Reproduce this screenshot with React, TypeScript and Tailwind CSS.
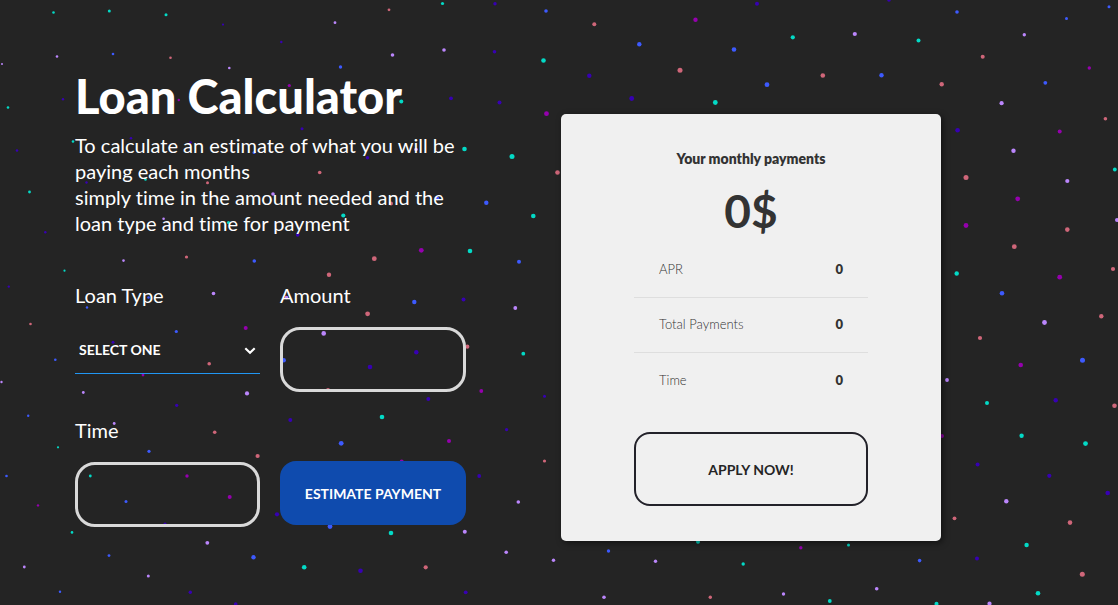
import { useState, type FormEvent } from "react";

type Dot = [x: number, y: number, r: number];

const CONFETTI: { color: string; dots: Dot[] }[] = [
  {
    color: "#03dac6",
    dots: [
      [53.5, 12.5, 1.3], [109.3, 11, 1.5], [166, 14.7, 1.5], [8, 107.5, 1.3], [73, 141.5, 1.3], [29.5, 192, 1.4],
      [64.5, 270.7, 1.1], [228.5, 222.5, 1.6], [145.5, 179.5, 1.3], [442.5, 3.5, 1.6], [543.5, 60.5, 2.3],
      [401.3, 101.5, 2], [464.5, 149, 2.3], [512, 156.5, 2.5], [533.3, 216, 2.3], [343.3, 215.5, 2.1], [470, 251, 2.3],
      [792.8, 37.3, 2.1], [715.3, 102.5, 2.4], [918.5, 40.5, 2], [1114.8, 169.5, 1.9], [956.7, 273.5, 2.2],
      [58, 447.3, 1.1], [90.3, 476, 1.4], [72, 532.4, 1.3], [523.3, 353.7, 1.9], [382, 417, 2.3], [391, 533, 2.3],
      [304.2, 567.3, 2.3], [698, 541.7, 2], [743.2, 564, 1.7], [829.8, 601, 1.9], [987, 403, 2], [1021.6, 435.7, 2.2],
      [1085.5, 443.6, 2.4], [1026.6, 545, 2.2], [848.5, 545, 1.5], [1038, 593.3, 2.3], [936.5, 603.7, 2],
    ],
  },
  {
    color: "#3700b3",
    dots: [
      [223, 24.6, 1.1], [63, 99.3, 1.2], [17, 150.5, 1.3], [131, 138.3, 1.3], [86.5, 182.5, 1.2], [45.3, 232.3, 1.2],
      [8.8, 286.6, 1.2], [190.5, 142.5, 1.3], [495, 3.8, 1.7], [281.3, 42, 1.2], [494.5, 51.7, 1.8], [451, 98.3, 1.9],
      [499.5, 102.5, 2], [302, 128.7, 1.5], [367.5, 157.7, 1.7], [297.7, 234.8, 1.9], [463.5, 299.5, 2],
      [757, 3.7, 2], [589.3, 75.8, 2.2], [631.7, 98.5, 2.4], [889, 0, 1.8], [957.6, 130.3, 2.3], [113, 342.3, 1.5],
      [176.7, 405.3, 1.6], [277, 514.3, 2.1], [165, 524, 1.6], [190.3, 592.3, 1.7], [235.7, 604, 1.8],
      [416.3, 352.3, 2.2], [370, 367, 2.3], [428.3, 399, 2], [290.3, 420, 2], [544.5, 396.3, 1.5], [506.6, 429.6, 1.6],
      [479.2, 476, 1.9], [360.5, 570.7, 2.3], [465.7, 592.3, 1.9], [1055.7, 400.3, 2.2], [977.6, 464.6, 2],
      [1049.3, 475.8, 2.1], [1107.7, 493, 2.3], [977, 558.4, 2],
    ],
  },
  {
    color: "#bb86fc",
    dots: [
      [2, 64, 1], [57, 56.5, 1.3], [229.3, 68, 1.3], [273, 194, 1.8], [163.6, 218.8, 1.3], [123.5, 260.6, 1.3],
      [213.5, 293.5, 1.8], [335, 22.7, 1.4], [392.5, 55, 1.8], [444, 50, 1.8], [416, 149.5, 1.8], [286.5, 297.5, 1.8],
      [854.8, 34, 2.1], [1024.3, 34.8, 1.7], [1001.6, 103.2, 2.1], [1013.5, 150.7, 2.2], [1067.3, 181, 2.1],
      [1117, 220, 2], [1.5, 382, 1.2], [83.3, 392.5, 1.4], [247, 393.4, 2.1], [114.2, 423.5, 1.4], [207.3, 542.8, 1.9],
      [24.3, 567, 1.4], [148.3, 576, 1.5], [515.3, 308, 1.9], [323.7, 333.4, 2.3], [518.3, 502, 1.8],
      [464.8, 531.7, 2], [506.2, 552.3, 1.8], [553.5, 560.3, 1.7], [655.5, 561.3, 1.7], [604, 597.3, 1.8],
      [783.5, 594, 1.7], [1044.5, 322.5, 2.4], [947, 380, 1.9], [1006.3, 501.3, 2.2], [876.7, 588.8, 1.8],
      [989.5, 603.5, 2.1],
    ],
  },
  {
    color: "#3d5afe",
    dots: [
      [113, 54, 1.3], [254, 152.5, 1.5], [254.3, 261, 1.8], [102.5, 222.5, 1.2], [148.5, 297.5, 1.3], [546, 11, 1.8],
      [340.5, 67, 1.7], [486.3, 202.7, 2.2], [437.5, 198.5, 1.8], [519, 261.7, 2], [414.3, 302, 2.2],
      [639.3, 44.3, 2.2], [734, 49.5, 2.3], [767, 84.7, 2.4], [957, 12, 1.8], [1109, 6.8, 1.5], [1066.5, 18.6, 1.5],
      [881.5, 75.2, 2.2], [1045.3, 82.8, 1.9], [1002, 293.3, 2.3], [87, 307.5, 1.2], [176.3, 331.5, 1.6],
      [55.3, 359.7, 1.3], [28.2, 415.8, 1.2], [6.5, 476, 1.3], [149, 451.3, 1.6], [126, 501.5, 1.5], [109, 555.6, 1.4],
      [253.5, 557.3, 2.2], [60, 591.7, 1.2], [283.7, 360.3, 2.2], [341.2, 443.3, 2.4], [330, 526.5, 2.4],
      [608.5, 551, 1.7], [1082.5, 360.3, 2.5], [919.6, 560.6, 1.8],
    ],
  },
  {
    color: "#cf6679",
    dots: [
      [170.5, 57.7, 1.3], [207.5, 182.7, 1.5], [186.5, 257, 1.6], [389, 9.8, 1.4], [319.7, 172.5, 1.8],
      [391, 203.5, 2], [374.3, 258.7, 2.4], [329, 274.7, 2.2], [557.5, 172.5, 2.3], [594.3, 24.3, 2], [680, 70.3, 2.5],
      [822.8, 75.5, 2.3], [982.7, 56.7, 2], [941.7, 84.3, 2.2], [1105.4, 118.7, 1.8], [966, 177.5, 2.5],
      [1067.3, 229.6, 2.3], [1014.3, 246.7, 2.4], [1113, 269, 2.1], [30.5, 324, 1.3], [209.2, 363.7, 1.8],
      [214.7, 432.2, 1.8], [257.6, 456, 2.1], [367.6, 313.8, 2.4], [467.3, 346.7, 2.1], [328, 390, 2],
      [544.5, 461, 1.6], [425.7, 567.3, 2.1], [710.3, 597.3, 1.7], [1101.3, 316.3, 2.2], [980, 338, 2.1],
      [1114.5, 405.7, 2.3], [954.5, 518.3, 1.9], [1070, 522.6, 2.3], [1082.3, 574.3, 2.5],
    ],
  },
  {
    color: "#9500ae",
    dots: [
      [178.8, 100, 1.2], [289.3, 85.5, 1.6], [351.3, 112, 1.8], [546.5, 113.7, 2.4], [421.3, 250.3, 2.4],
      [695.5, 19.7, 2.2], [1089.3, 68, 1.7], [1059.7, 131.6, 2], [1017.7, 198.8, 2.4], [966, 225.5, 2.4],
      [1059.7, 277.2, 2.4], [245.7, 328, 2], [143, 375, 1.4], [38, 505.4, 1.2], [187, 476, 1.7], [229.7, 497, 2],
      [481.3, 391, 1.9], [449, 441, 2], [401.7, 461.5, 2], [800.8, 547.7, 1.7], [1020.7, 365, 2.3], [942, 436, 1.9],
    ],
  },
];

function Confetti() {
  return (
    <svg
      className="absolute inset-0 h-full w-full"
      viewBox="0 0 1118 605"
      preserveAspectRatio="xMidYMid slice"
      aria-hidden="true"
    >
      {CONFETTI.map(({ color, dots }) => (
        <g key={color} fill={color}>
          {dots.map(([x, y, r]) => (
            <circle key={`${x}-${y}`} cx={x} cy={y} r={r} />
          ))}
        </g>
      ))}
    </svg>
  );
}

const labelClass = "text-[20px] leading-[26px]";
const fieldClass =
  "h-[65px] w-full rounded-[20px] border-3 border-[#d9d9d9] bg-transparent px-5 text-[16px] text-white outline-none";

function LoanForm({ onEstimate }: { onEstimate: (amount: number, months: number) => void }) {
  const [amount, setAmount] = useState("");
  const [time, setTime] = useState("");

  const submit = (event: FormEvent) => {
    event.preventDefault();
    onEstimate(Number(amount) || 0, Number(time) || 0);
  };

  return (
    <form onSubmit={submit} className="mt-[46px] grid grid-cols-[185fr_186fr] gap-x-5 gap-y-[25px]">
      <div className="flex flex-col gap-[19px]">
        <label htmlFor="loan-type" className={labelClass}>
          Loan Type
        </label>
        <div className="relative">
          <select
            id="loan-type"
            className="h-[47px] w-full appearance-none border-b border-[#2196f3] bg-transparent px-1 pb-0.5 text-[14px] font-bold text-white uppercase outline-none"
          >
            <option>Select one</option>
            <option>Personal</option>
            <option>Mortgage</option>
            <option>Car</option>
          </select>
          <svg
            className="pointer-events-none absolute top-5 right-1 h-2 w-3"
            viewBox="0 0 12 8"
            fill="none"
            stroke="#fff"
            strokeWidth="2.2"
            aria-hidden="true"
          >
            <path d="M1.3 1.3 6 5.7l4.7-4.4" />
          </svg>
        </div>
      </div>
      <div className="flex flex-col gap-[19px]">
        <label htmlFor="amount" className={labelClass}>
          Amount
        </label>
        <input id="amount" value={amount} onChange={(e) => setAmount(e.target.value)} className={fieldClass} />
      </div>
      <div className="flex flex-col gap-[19px]">
        <label htmlFor="time" className={labelClass}>
          Time
        </label>
        <input id="time" value={time} onChange={(e) => setTime(e.target.value)} className={fieldClass} />
      </div>
      <button
        type="submit"
        className="mb-0.5 h-16 self-end rounded-2xl bg-[#0f4bae] text-[14px] font-bold text-white uppercase"
      >
        Estimate payment
      </button>
    </form>
  );
}

function Summary({ amount, months }: { amount: number; months: number }) {
  const monthly = months > 0 ? Math.round(amount / months) : 0;
  const rows = [
    { label: "APR", value: 0 },
    { label: "Total Payments", value: amount },
    { label: "Time", value: months },
  ];

  return (
    <section className="flex flex-col rounded-[5px] bg-[#f0f0f0] px-[73px] py-[35px] text-[#333] shadow-[2px_2px_6px_rgba(0,0,0,0.5)]">
      <h2 className="text-center text-[14px] leading-5 font-extrabold">Your monthly payments</h2>
      <p className="mt-3 mb-0.5 text-center text-[46px] leading-[60px] font-bold">{monthly}$</p>
      <dl className="divide-y divide-[#dedede]">
        {rows.map(({ label, value }) => (
          <div key={label} className="flex h-[55px] items-center justify-between px-[25px]">
            <dt className="text-[13px] font-light">{label}</dt>
            <dd className="text-[13px] font-extrabold">{value}</dd>
          </div>
        ))}
      </dl>
      <button
        type="button"
        className="mt-6 h-[74px] rounded-2xl border-2 border-[#23222a] text-[14px] font-bold text-[#252525] uppercase"
      >
        Apply now!
      </button>
    </section>
  );
}

export default function App() {
  const [estimate, setEstimate] = useState({ amount: 0, months: 0 });

  return (
    <main className="relative min-h-screen overflow-hidden bg-[#242424] font-[Lato,sans-serif] text-white [font-variant-ligatures:none]">
      <Confetti />
      <div className="relative grid gap-12 px-6 pt-[66px] pb-12 md:grid-cols-[391fr_380fr] md:gap-[95px] md:pr-[177px] md:pl-[75px]">
        <div>
          <h1 className="text-[47px] leading-[60px] font-black">Loan Calculator</h1>
          <p className="mt-1.5 text-[20px] leading-[26px]">
            To calculate an estimate of what you will be paying each months
            <br />
            simply time in the amount needed and the loan type and time for payment
          </p>
          <LoanForm onEstimate={(amount, months) => setEstimate({ amount, months })} />
        </div>
        <div className="md:pt-12">
          <Summary amount={estimate.amount} months={estimate.months} />
        </div>
      </div>
    </main>
  );
}
